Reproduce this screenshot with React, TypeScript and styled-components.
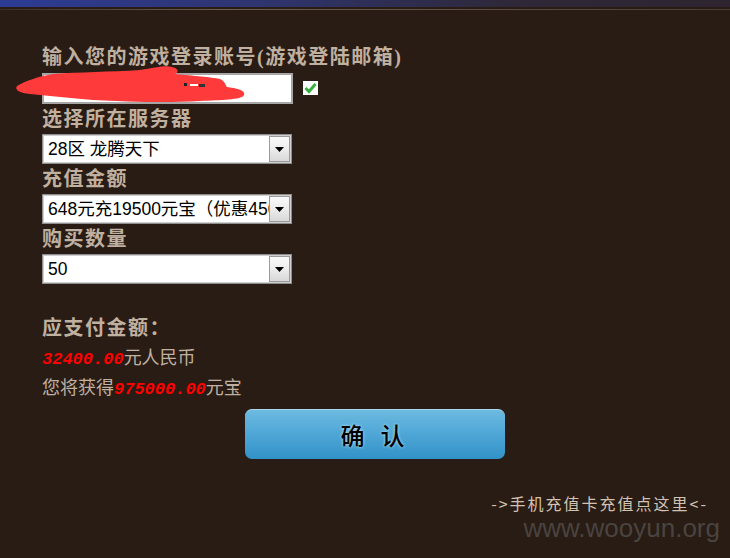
import React from "react";
import styled, { createGlobalStyle } from "styled-components";

const GlobalStyle = createGlobalStyle`
  html, body {
    margin: 0;
    padding: 0;
    background: #281c14;
  }
`;

const Page = styled.div`
  width: 730px;
  height: 558px;
  overflow: hidden;
  background: #281c14;
  font-family: "Liberation Serif", "Noto Sans CJK SC", serif;
`;

const TopBar = styled.div`
  height: 7px;
  background: linear-gradient(90deg, #2d3b94 0%, #2f3570 35%, #2e2838 70%, #2e2530 100%);
`;

const TopRule = styled.div`
  height: 1px;
  margin-top: 2px;
  background: linear-gradient(90deg, #3a3028 0%, #6a5c4e 30%, #5a4c40 70%, #4a3e34 100%);
`;

const Content = styled.div`
  padding: 32px 0 0 42px;
`;

const Label = styled.div`
  height: 30px;
  line-height: 30px;
  font-size: 20px;
  font-weight: 700;
  letter-spacing: 1.5px;
  color: #c0b0a0;
  white-space: nowrap;
`;

const AccountRow = styled.div`
  position: relative;
  display: flex;
  align-items: center;
  gap: 10px;
  height: 32px;
`;

const TextInput = styled.div`
  box-sizing: border-box;
  width: 251px;
  height: 31px;
  background: #fff;
  border: 2px solid #a6a6a6;
`;

const Scribble = styled.svg`
  position: absolute;
  left: -32px;
  top: -7px;
  pointer-events: none;
`;

const SelectBox = styled.div`
  box-sizing: border-box;
  display: flex;
  align-items: stretch;
  width: 250px;
  height: 30px;
  background: #fff;
  border: 1px solid #8e8e8e;
  box-shadow: inset 0 0 0 1px #cfcfcf;
  padding: 1px;
`;

const SelectText = styled.span`
  flex: 1;
  overflow: hidden;
  white-space: nowrap;
  padding-left: 4px;
  font-family: "Liberation Sans", "Noto Sans CJK SC", sans-serif;
  font-size: 17.5px;
  line-height: 26px;
  color: #000;
`;

const ArrowButton = styled.span`
  box-sizing: border-box;
  flex: none;
  width: 21px;
  display: flex;
  align-items: center;
  justify-content: center;
  border: 1px solid #9a9a9a;
  background: linear-gradient(180deg, #fafafa 0%, #ececec 50%, #d8d8d8 100%);
`;

const Summary = styled.div`
  margin-top: 29px;
`;

const InfoLine = styled.div`
  height: 30px;
  line-height: 30px;
  font-size: 18px;
  color: #c0b0a0;
  white-space: nowrap;
`;

const Amount = styled.span`
  font-family: "Liberation Mono", monospace;
  font-style: italic;
  font-weight: 700;
  font-size: 17px;
  color: #ff0000;
`;

const ConfirmButton = styled.button`
  display: block;
  margin: 6px 0 0 203px;
  width: 260px;
  height: 50px;
  border: none;
  border-top: 1px solid #a8d8f0;
  border-radius: 7px;
  background: linear-gradient(180deg, #6cbae0 0%, #4ea6d6 50%, #3292c8 100%);
  font-family: "Liberation Serif", "Noto Sans CJK SC", serif;
  font-size: 24px;
  font-weight: 500;
  color: #000;
  letter-spacing: 5px;
  text-shadow: 0 0 3px #c8ecff;
  cursor: pointer;
`;

const Footer = styled.div`
  margin-top: 34px;
  padding-right: 22px;
  text-align: right;
  font-family: "Noto Sans CJK SC", "Liberation Sans", sans-serif;
  font-size: 16px;
  line-height: 20px;
  letter-spacing: 2px;
  color: #d2c2b2;
`;

const Watermark = styled.div`
  padding-right: 10px;
  text-align: right;
  font-family: "Liberation Sans", sans-serif;
  font-size: 26px;
  line-height: 30px;
  color: #4a4440;
`;

function DropArrow() {
  return (
    <svg width="9" height="5" viewBox="0 0 9 5">
      <polygon points="0,0 9,0 4.5,5" fill="#000" />
    </svg>
  );
}

function Select({ value }: { value: string }) {
  return (
    <SelectBox>
      <SelectText>{value}</SelectText>
      <ArrowButton>
        <DropArrow />
      </ArrowButton>
    </SelectBox>
  );
}

export default function App() {
  return (
    <Page>
      <GlobalStyle />
      <TopBar />
      <TopRule />
      <Content>
        <Label>输入您的游戏登录账号(游戏登陆邮箱)</Label>
        <AccountRow>
          <TextInput />
          <svg width="15" height="14" viewBox="0 0 15 14">
            <rect width="15" height="14" fill="#fff" />
            <polyline
              points="2.5,7 6,10.5 12.5,3"
              fill="none"
              stroke="#38b040"
              strokeWidth="3"
            />
          </svg>
          <Scribble width="240" height="40" viewBox="0 0 240 40">
            <path
              d="M7 21 C15 16 30 11 43 9 C70 7 100 7 130 5 C145 3 155 0 162 2 C170 4 168 8 165 9 C185 11 200 12 210 14 C216 17 215 20 217 22 C225 23 236 25 234 30 C232 35 210 35 190 36 C160 38 120 37 83 35 C60 33 40 31 20 29 C10 28 4 25 7 21 Z"
              fill="#ff3a3a"
            />
            <rect x="174" y="18" width="3" height="3" fill="#222" />
            <rect x="180" y="19" width="8" height="2" fill="#fff" />
            <rect x="189" y="19" width="6" height="3" fill="#333" />
          </Scribble>
        </AccountRow>
        <Label>选择所在服务器</Label>
        <Select value="28区 龙腾天下" />
        <Label>充值金额</Label>
        <Select value="648元充19500元宝（优惠4500元宝）" />
        <Label>购买数量</Label>
        <Select value="50" />
        <Summary>
          <Label>应支付金额：</Label>
          <InfoLine>
            <Amount>32400.00</Amount>元人民币
          </InfoLine>
          <InfoLine>
            您将获得<Amount>975000.00</Amount>元宝
          </InfoLine>
        </Summary>
        <ConfirmButton>确 认</ConfirmButton>
      </Content>
      <Footer>-&gt;手机充值卡充值点这里&lt;-</Footer>
      <Watermark>www.wooyun.org</Watermark>
    </Page>
  );
}
